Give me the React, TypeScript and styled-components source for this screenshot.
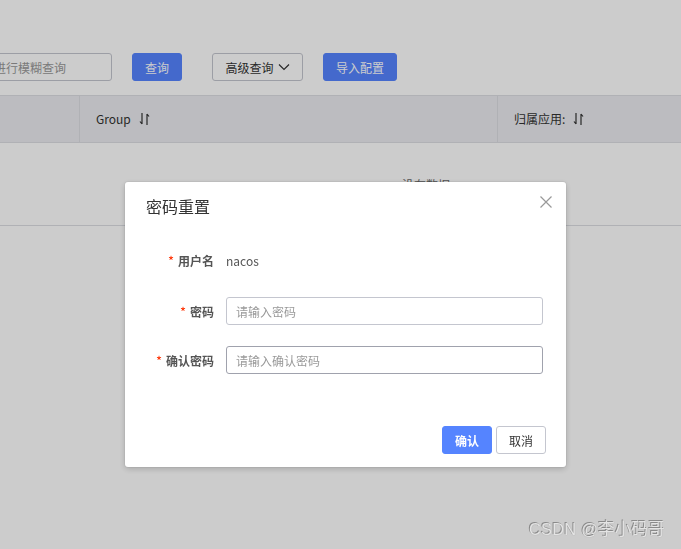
import React from "react";
import styled, { createGlobalStyle } from "styled-components";

const Global = createGlobalStyle`
  html, body { margin: 0; padding: 0; width: 681px; height: 549px; overflow: hidden; background: #fff; }
  body { font-family: "Noto Sans CJK SC", "Noto Sans", sans-serif; color: #333; }
  * { box-sizing: border-box; }
`;

const Page = styled.div`
  width: 681px;
  height: 549px;
  padding-top: 53px;
  overflow: hidden;
`;

const Toolbar = styled.div`
  display: flex;
  align-items: center;
  height: 28px;
  margin-bottom: 14px;
`;

const SearchInput = styled.div`
  width: 127px;
  height: 28px;
  margin-left: -15px;
  margin-right: 20px;
  border: 1px solid #c4c6cf;
  border-radius: 3px;
  padding-left: 8px;
  display: flex;
  align-items: center;
  font-size: 12px;
  color: #999;
  white-space: nowrap;
`;

const Btn = styled.div<{ $primary?: boolean; $w: number; $ml?: number }>`
  width: ${(p) => p.$w}px;
  margin-left: ${(p) => p.$ml ?? 0}px;
  height: 28px;
  border-radius: 3px;
  display: flex;
  align-items: center;
  justify-content: center;
  gap: 4px;
  font-size: 12px;
  background: ${(p) => (p.$primary ? "#5584ff" : "#fff")};
  color: ${(p) => (p.$primary ? "#fff" : "#333")};
  border: 1px solid ${(p) => (p.$primary ? "#5584ff" : "#c4c6cf")};
`;

const TableHead = styled.div`
  display: grid;
  grid-template-columns: 79px 418px 1fr;
  height: 48px;
  background: #ebecf0;
  border-top: 1px solid #dcdee3;
  border-bottom: 1px solid #dcdee3;
`;

const HeadCell = styled.div<{ $first?: boolean }>`
  display: flex;
  align-items: center;
  gap: 8px;
  padding-left: 16px;
  padding-bottom: 1px;
  font-size: 12px;
  color: #333;
  border-left: ${(p) => (p.$first ? "none" : "1px solid #dcdee3")};
`;

const EmptyRow = styled.div`
  height: 83px;
  border-bottom: 1px solid #dcdee3;
  display: flex;
  align-items: center;
  padding-left: 402px;
  font-size: 12px;
  color: #666;
`;

const Overlay = styled.div`
  position: fixed;
  inset: 0;
  background: rgba(0, 0, 0, 0.2);
`;

const Dialog = styled.div`
  position: fixed;
  left: 125px;
  top: 182px;
  width: 441px;
  height: 285px;
  background: #fff;
  border-radius: 3px;
  box-shadow: 0 2px 6px rgba(0, 0, 0, 0.18), 0 0 0 1px rgba(0, 0, 0, 0.04);
  display: flex;
  flex-direction: column;
`;

const DialogHeader = styled.div`
  display: flex;
  align-items: center;
  justify-content: space-between;
  padding: 11px 14px 0 21px;
  height: 36px;
`;

const Title = styled.div`
  font-size: 16px;
  color: #333;
  line-height: 24px;
`;

const Close = styled.div`
  width: 12px;
  height: 12px;
  margin-top: -7px;
  display: flex;
`;

const Form = styled.div`
  display: flex;
  flex-direction: column;
  gap: 21px;
  padding: 30px 23px 0 0;
`;

const Row = styled.div<{ $text?: boolean }>`
  display: grid;
  grid-template-columns: 89px 1fr;
  column-gap: 12px;
  align-items: center;
  height: 28px;
  margin-top: ${(p) => (p.$text ? "-2px" : "0")};
  margin-bottom: ${(p) => (p.$text ? "2px" : "0")};
`;

const Label = styled.div`
  text-align: right;
  font-size: 12px;
  font-weight: 700;
  color: #555;
  white-space: nowrap;
`;

const Star = styled.span`
  color: #ff3000;
  margin-right: 4px;
  font-weight: 400;
  font-size: 13px;
`;

const Value = styled.div`
  font-size: 12px;
  color: #555;
`;

const Input = styled.div<{ $dark?: boolean }>`
  height: 28px;
  border: 1px solid ${(p) => (p.$dark ? "#a0a2ad" : "#c4c6cf")};
  border-radius: 3px;
  padding-left: 9px;
  display: flex;
  align-items: center;
  font-size: 12px;
  color: #999;
`;

const Footer = styled.div`
  margin-top: auto;
  display: flex;
  justify-content: flex-end;
  gap: 4px;
  padding: 0 20px 13px 0;
`;

const FootBtn = styled.div<{ $primary?: boolean }>`
  width: 50px;
  height: 28px;
  border-radius: 3px;
  display: flex;
  align-items: center;
  justify-content: center;
  font-size: 12px;
  font-weight: ${(p) => (p.$primary ? 700 : 400)};
  background: ${(p) => (p.$primary ? "#5584ff" : "#fff")};
  color: ${(p) => (p.$primary ? "#fff" : "#333")};
  border: 1px solid ${(p) => (p.$primary ? "#5584ff" : "#c4c6cf")};
`;

const Watermark = styled.div`
  position: fixed;
  right: 16px;
  bottom: 9px;
  font-family: "Liberation Sans", "Noto Sans CJK SC", sans-serif;
  font-size: 16.5px;
  color: #e4e4e4;
  text-shadow: -1px -1px 0 #8a8a8a, 0 0 1px #999;
  letter-spacing: 0.2px;
`;

const SortIcon = () => (
  <svg width="11" height="14" viewBox="0 0 11 14" fill="none" stroke="#333" strokeWidth="1.2">
    <path d="M3 1v11M1 9.5l2 2.5" />
    <path d="M8 13V2M8 2l2 2.5" />
  </svg>
);

const ChevronDown = () => (
  <svg width="12" height="8" viewBox="0 0 12 8" fill="none" stroke="#333" strokeWidth="1.2">
    <path d="M1 1.5l5 5 5-5" />
  </svg>
);

const CloseIcon = () => (
  <svg width="12" height="12" viewBox="0 0 12 12" stroke="#999" strokeWidth="1.2">
    <path d="M0.5 0.5l11 11M11.5 0.5l-11 11" />
  </svg>
);

export default function App() {
  return (
    <>
      <Global />
      <Page>
        <Toolbar>
          <SearchInput>进行模糊查询</SearchInput>
          <Btn $primary $w={50}>查询</Btn>
          <Btn $w={91} $ml={30}>
            高级查询 <ChevronDown />
          </Btn>
          <Btn $primary $w={74} $ml={20}>导入配置</Btn>
        </Toolbar>
        <TableHead>
          <HeadCell $first />
          <HeadCell>
            Group <SortIcon />
          </HeadCell>
          <HeadCell>
            归属应用: <SortIcon />
          </HeadCell>
        </TableHead>
        <EmptyRow>没有数据</EmptyRow>
      </Page>
      <Overlay />
      <Dialog>
        <DialogHeader>
          <Title>密码重置</Title>
          <Close>
            <CloseIcon />
          </Close>
        </DialogHeader>
        <Form>
          <Row $text>
            <Label>
              <Star>*</Star>用户名
            </Label>
            <Value>nacos</Value>
          </Row>
          <Row>
            <Label>
              <Star>*</Star>密码
            </Label>
            <Input>请输入密码</Input>
          </Row>
          <Row>
            <Label>
              <Star>*</Star>确认密码
            </Label>
            <Input $dark>请输入确认密码</Input>
          </Row>
        </Form>
        <Footer>
          <FootBtn $primary>确认</FootBtn>
          <FootBtn>取消</FootBtn>
        </Footer>
      </Dialog>
      <Watermark>CSDN @李小码哥</Watermark>
    </>
  );
}
